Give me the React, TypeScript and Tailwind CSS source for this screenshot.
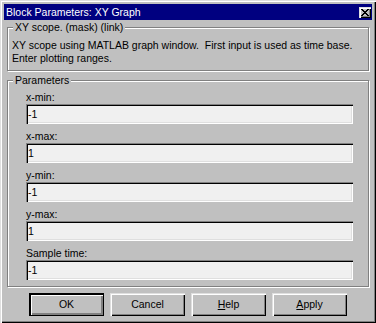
import React from "react";

const raised =
  "shadow-[inset_1px_1px_0_#dfdfdf,inset_2px_2px_0_#ffffff,inset_-1px_-1px_0_#000000,inset_-2px_-2px_0_#808080]";
const sunken =
  "shadow-[inset_1px_1px_0_#808080,inset_2px_2px_0_#000000,inset_-1px_-1px_0_#ffffff,inset_-2px_-2px_0_#dfdfdf]";
const etched = "border border-[#808080] shadow-[1px_1px_0_#ffffff,inset_1px_1px_0_#ffffff]";

const fields = [
  { label: "x-min:", value: "-1" },
  { label: "x-max:", value: "1" },
  { label: "y-min:", value: "-1" },
  { label: "y-max:", value: "1" },
  { label: "Sample time:", value: "-1" },
];

const CloseGlyph = () => (
  <svg width="8" height="7" viewBox="0 0 8 7" shapeRendering="crispEdges">
    <path
      fill="#000"
      d="M0 0h2v1H0zM6 0h2v1H6zM1 1h2v1H1zM5 1h2v1H5zM2 2h4v1H2zM3 3h2v1H3zM2 4h4v1H2zM1 5h2v1H1zM5 5h2v1H5zM0 6h2v1H0zM6 6h2v1H6z"
    />
  </svg>
);

const GroupBox = ({
  title,
  className,
  children,
}: {
  title: string;
  className: string;
  children: React.ReactNode;
}) => (
  <div className={`relative ${etched} ${className}`}>
    <span className="absolute -top-[7px] left-[5px] bg-[#c0c0c0] px-[2px] leading-[13px]">
      {title}
    </span>
    {children}
  </div>
);

const Button = ({
  children,
  isDefault = false,
}: {
  children: React.ReactNode;
  isDefault?: boolean;
}) => (
  <button
    className={`w-[75px] h-[23px] bg-[#c0c0c0] flex items-center justify-center leading-[13px] ${
      isDefault
        ? "shadow-[inset_0_0_0_1px_#000000,inset_1px_1px_0_1px_#000000,inset_2px_2px_0_1px_#ffffff,inset_-2px_-2px_0_1px_#808080]"
        : raised
    }`}
  >
    {children}
  </button>
);

export default function App() {
  return (
    <div
      className={`w-[376px] h-[323px] bg-[#c0c0c0] p-[4px] flex flex-col text-[10.5px] text-black font-['Liberation_Sans',Arial,sans-serif] ${raised}`}
    >
      {/* title bar */}
      <div className="h-[16px] bg-[#000080] flex items-center justify-between pl-[2px] pr-[1px]">
        <span className="text-white leading-[13px]">Block Parameters: XY Graph</span>
        <div className={`w-[12px] h-[11px] bg-[#c0c0c0] flex items-center justify-center ${raised}`}>
          <CloseGlyph />
        </div>
      </div>

      <div className="flex flex-col px-[3px]">
        <GroupBox title="XY scope. (mask) (link)" className="mt-[7px] h-[44px] pt-[11px] pl-[4px]">
          <p className="leading-[13px]">
            XY scope using MATLAB graph window.&nbsp; First input is used as time base.
            <br />
            Enter plotting ranges.
          </p>
        </GroupBox>

        <GroupBox title="Parameters" className="mt-[9px] h-[207px] pt-[10px] pl-[18px] flex flex-col gap-[6px]">
          {fields.map((f) => (
            <div key={f.label} className="flex flex-col">
              <span className="leading-[13px]">{f.label}</span>
              <div
                className={`w-[327px] h-[20px] bg-[#f0f0f0] flex items-center pl-[2px] leading-[13px] ${sunken}`}
              >
                {f.value}
              </div>
            </div>
          ))}
        </GroupBox>

        <div className="mt-[6px] pl-[22px] flex gap-[6px]">
          <Button isDefault>OK</Button>
          <Button>Cancel</Button>
          <Button>
            <span>
              <u className="underline-offset-1">H</u>elp
            </span>
          </Button>
          <Button>
            <span>
              <u className="underline-offset-1">A</u>pply
            </span>
          </Button>
        </div>
      </div>
    </div>
  );
}
